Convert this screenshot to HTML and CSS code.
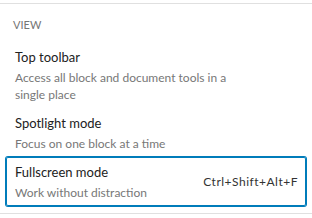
FILE: index.html
```html
<!DOCTYPE html>
<html lang="en">
<head>
<meta charset="utf-8">
<title>View menu</title>
<link rel="stylesheet" href="styles.css">
</head>
<body>
<div class="group">
  <div class="label">View</div>
  <div class="items">
    <div class="item">
      <div class="info">
        <div class="title">Top toolbar</div>
        <div class="desc">Access all block and document tools in a single place</div>
      </div>
    </div>
    <div class="item">
      <div class="info">
        <div class="title">Spotlight mode</div>
        <div class="desc">Focus on one block at a time</div>
      </div>
    </div>
    <div class="item focused">
      <div class="info">
        <div class="title">Fullscreen mode</div>
        <div class="desc">Work without distraction</div>
      </div>
      <span class="shortcut">Ctrl+Shift+Alt+F</span>
    </div>
  </div>
</div>
</body>
</html>
```
FILE: styles.css
```css
html, body {
  margin: 0;
  background: #fff;
}
body {
  font-family: Lato, "Liberation Sans", sans-serif;
  color: #1e1e1e;
}
.group {
  margin-top: 3px;
  border-top: 1px solid #e0e0e0;
  border-bottom: 1px solid #e0e0e0;
  padding: 13px 6px 7px;
}
.label {
  font-size: 11px;
  line-height: 16px;
  color: #757575;
  text-transform: uppercase;
  padding-left: 7px;
  margin-bottom: 9px;
}
.item {
  display: flex;
  align-items: center;
  justify-content: space-between;
  padding: 5px 8px 5px 9px;
  border-radius: 2px;
}
.title {
  font-size: 13px;
  line-height: 20px;
  color: #222;
}
.desc {
  font-size: 12px;
  line-height: 17px;
  color: #777;
  margin-top: 2px;
  max-width: 230px;
}
.focused {
  box-shadow: 0 0 0 1px #007cba, inset 0 0 0 1px #007cba;
}
.shortcut {
  font-size: 12px;
  line-height: 17px;
  letter-spacing: 0.5px;
  color: #333;
}
```
